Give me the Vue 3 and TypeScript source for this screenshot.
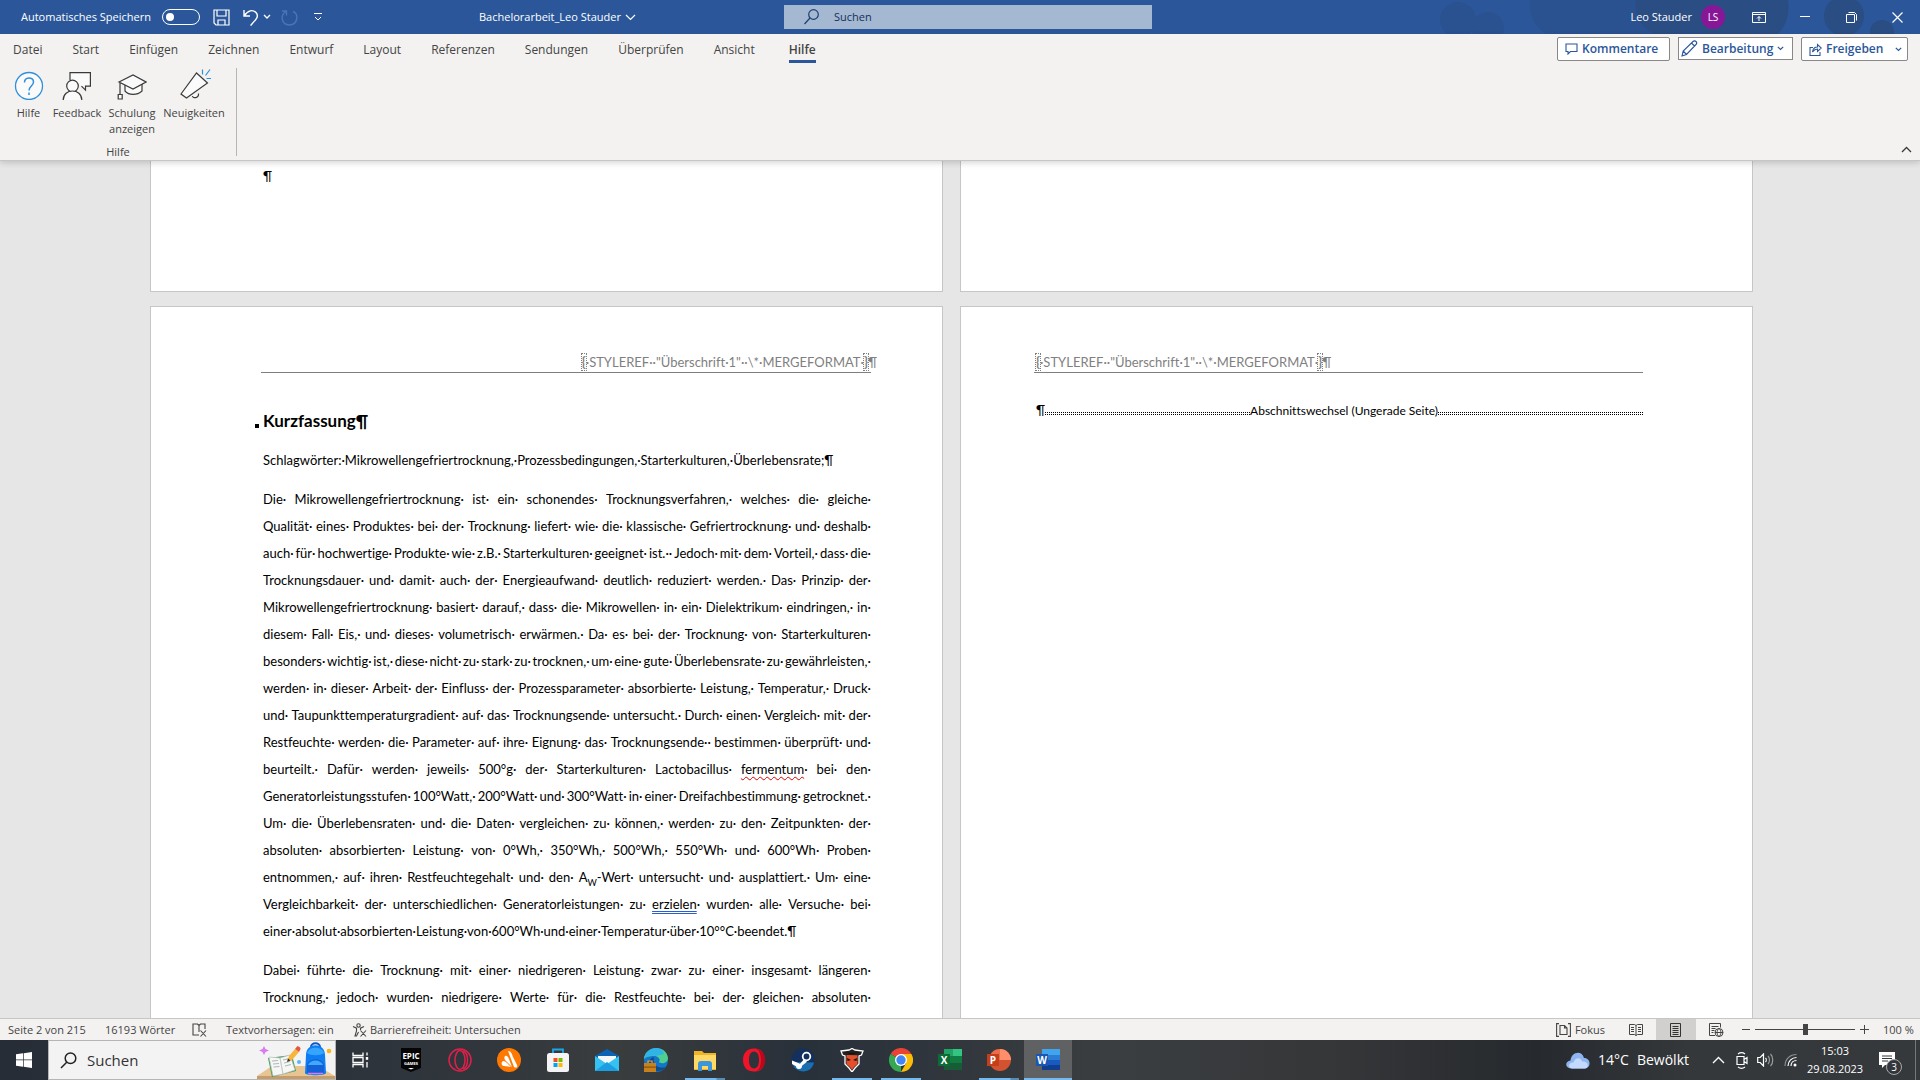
<script setup lang="ts">
import { ref } from 'vue'

interface RibbonCommand {
  icon: string
  lines: string[]
}

interface TaskApp {
  id: string
  running?: boolean
  grouped?: boolean
  active?: boolean
}

const tabs = ['Datei', 'Start', 'Einfügen', 'Zeichnen', 'Entwurf', 'Layout', 'Referenzen', 'Sendungen', 'Überprüfen', 'Ansicht', 'Hilfe']
const activeTab = ref('Hilfe')
const autosave = ref(false)
const zoom = ref(50)

const commands: RibbonCommand[] = [
  { icon: 'help', lines: ['Hilfe'] },
  { icon: 'feedback', lines: ['Feedback'] },
  { icon: 'training', lines: ['Schulung', 'anzeigen'] },
  { icon: 'news', lines: ['Neuigkeiten'] },
]

const apps: TaskApp[] = [
  { id: 'epic' },
  { id: 'operagx' },
  { id: 'avast' },
  { id: 'store' },
  { id: 'mail' },
  { id: 'edge' },
  { id: 'explorer', running: true, grouped: true },
  { id: 'opera' },
  { id: 'steam' },
  { id: 'knight', running: true },
  { id: 'chrome', running: true },
  { id: 'excel' },
  { id: 'powerpoint', running: true, grouped: true },
  { id: 'word', running: true, active: true },
]

const keywords = 'Schlagwörter:·Mikrowellengefriertrocknung,·Prozessbedingungen,·Starterkulturen,·Überlebensrate;'

const abstract = [
  'Die Mikrowellengefriertrocknung ist ein schonendes Trocknungsverfahren, welches die gleiche',
  'Qualität eines Produktes bei der Trocknung liefert wie die klassische Gefriertrocknung und deshalb',
  'auch für hochwertige Produkte wie z.B. Starterkulturen geeignet ist.· Jedoch mit dem Vorteil, dass die',
  'Trocknungsdauer und damit auch der Energieaufwand deutlich reduziert werden. Das Prinzip der',
  'Mikrowellengefriertrocknung basiert darauf, dass die Mikrowellen in ein Dielektrikum eindringen, in',
  'diesem Fall Eis, und dieses volumetrisch erwärmen. Da es bei der Trocknung von Starterkulturen',
  'besonders wichtig ist, diese nicht zu stark zu trocknen, um eine gute Überlebensrate zu gewährleisten,',
  'werden in dieser Arbeit der Einfluss der Prozessparameter absorbierte Leistung, Temperatur, Druck',
  'und Taupunkttemperaturgradient auf das Trocknungsende untersucht. Durch einen Vergleich mit der',
  'Restfeuchte werden die Parameter auf ihre Eignung das Trocknungsende· bestimmen überprüft und',
  'beurteilt. Dafür werden jeweils 500°g der Starterkulturen Lactobacillus fermentum bei den',
  'Generatorleistungsstufen 100°Watt, 200°Watt und 300°Watt in einer Dreifachbestimmung getrocknet.',
  'Um die Überlebensraten und die Daten vergleichen zu können, werden zu den Zeitpunkten der',
  'absoluten absorbierten Leistung von 0°Wh, 350°Wh, 500°Wh, 550°Wh und 600°Wh Proben',
  'entnommen, auf ihren Restfeuchtegehalt und den A_W-Wert untersucht und ausplattiert. Um eine',
  'Vergleichbarkeit der unterschiedlichen Generatorleistungen zu erzielen wurden alle Versuche bei',
].map((line) => line.split(' '))

const abstractEnd = 'einer·absolut·absorbierten·Leistung·von·600°Wh·und·einer·Temperatur·über·10°°C·beendet.'

const results = [
  'Dabei führte die Trocknung mit einer niedrigeren Leistung zwar zu einer insgesamt längeren',
  'Trocknung, jedoch wurden niedrigere Werte für die Restfeuchte bei der gleichen absoluten',
].map((line) => line.split(' '))

const proofing: Record<string, string> = { fermentum: 'spelling', erzielen: 'grammar' }
</script>

<template>
  <div class="screen">
    <header class="titlebar">
      <svg class="clouds" width="540" height="34" viewBox="0 0 540 34" aria-hidden="true">
        <g fill="#2a5190">
          <circle cx="78" cy="20" r="18" /><circle cx="108" cy="28" r="16" />
          <path d="M150 0h124v34H166c-12-8-18-20-16-34z" />
        </g>
        <g fill="#2a4d83">
          <path d="M256 0h152c2 14-2 26-10 34H274c-14-8-20-20-18-34z" />
          <circle cx="464" cy="16" r="20" /><circle cx="502" cy="32" r="12" />
        </g>
      </svg>
      <div class="quick">
        <label class="autosave">Automatisches Speichern
          <input v-model="autosave" type="checkbox" class="switch" />
        </label>
        <button class="bare save" aria-label="Speichern">
          <svg width="17" height="17" viewBox="0 0 17 17" fill="none" stroke="#fff" stroke-width="1.2"><path d="M1 1h15v15H3l-2-2zM4 1v6h9V1M5 16v-5h7v5" /></svg>
        </button>
        <button class="bare undo" aria-label="Rückgängig">
          <svg width="16" height="17" viewBox="0 0 16 17" fill="none" stroke="#fff" stroke-width="1.4"><path d="M1 1v6h6M1.500 6.500C5 1 10 .5 13 3.500c3.500 4 0 7-5.500 13" /></svg>
          <svg width="8" height="6" viewBox="0 0 8 6" fill="none" stroke="#fff" stroke-width="1.300"><path d="M1 1l3 3 3-3" /></svg>
        </button>
        <button class="bare redo" aria-label="Wiederholen" disabled>
          <svg width="17" height="17" viewBox="0 0 17 17" fill="none" stroke="#4a76b5" stroke-width="1.400"><path d="M5 2.500C-1 6 0 15.500 8.500 16 17 15.500 18 5 12 2.500M1 2h4.500v4.500" /></svg>
        </button>
        <button class="bare custom" aria-label="Symbolleiste anpassen">
          <svg width="8" height="8" viewBox="0 0 8 8" fill="none" stroke="#fff"><path d="M0 .5h8M1 4l3 3 3-3" /></svg>
        </button>
      </div>
      <button class="bare docname">Bachelorarbeit_Leo Stauder
        <svg width="11" height="7" viewBox="0 0 11 7" fill="none" stroke="#fff" stroke-width="1.200"><path d="M1 1l4.500 4.500L10 1" /></svg>
      </button>
      <div class="searchbox">
        <svg width="15" height="16" viewBox="0 0 15 16" fill="none" stroke="#1c3f73" stroke-width="1.200"><circle cx="9.500" cy="5.500" r="4.800" /><path d="M6 9l-5.500 6" /></svg>
        <input type="text" placeholder="Suchen" aria-label="Suchen" />
      </div>
      <div class="account">
        <span>Leo Stauder</span>
        <span class="avatar">LS</span>
        <button class="bare win" aria-label="Menüband-Anzeigeoptionen">
          <svg width="14" height="11" viewBox="0 0 14 11" fill="none" stroke="#fff"><path d="M.5.5h13v10H.5zM.5 2.500h13M7 9V4.500M5 6.500l2-2 2 2" /></svg>
        </button>
        <button class="bare win" aria-label="Minimieren">
          <svg width="11" height="11" viewBox="0 0 11 11" stroke="#fff"><path d="M0 4.500h10" /></svg>
        </button>
        <button class="bare win" aria-label="Verkleinern">
          <svg width="11" height="11" viewBox="0 0 11 11" fill="none" stroke="#fff"><path d="M.5 2.500h8v8h-8zM2.500.5h6l2 2v6" /></svg>
        </button>
        <button class="bare win" aria-label="Schließen">
          <svg width="11" height="11" viewBox="0 0 11 11" stroke="#fff" stroke-width="1.200"><path d="M.5.5l10 10M10.500.5l-10 10" /></svg>
        </button>
      </div>
    </header>

    <section class="ribbon">
      <div class="tabrow">
        <nav class="tabs">
          <button v-for="tab in tabs" :key="tab" class="tab" :class="{ current: tab === activeTab }" @click="activeTab = tab"><span>{{ tab }}</span></button>
        </nav>
        <div class="actions">
          <button class="action comments">
            <svg width="13" height="12" viewBox="0 0 13 12" fill="none" stroke="#2b579a" stroke-width="1.100"><path d="M1 1h11v7.500H5.500L3 11V8.500H1z" /></svg>
            Kommentare
          </button>
          <button class="action editing">
            <svg width="17" height="17" viewBox="0 0 17 17" fill="none" stroke="#2b579a" stroke-width="1.100"><path d="M1 16l1.200-5L12 1.500c1-1 2.300-.7 3 0s1 2 0 3L5.500 14.500zM10.500 3l3 3M2.200 11l3.300 3.500" /></svg>
            Bearbeitung
            <svg width="7" height="5" viewBox="0 0 7 5" fill="none" stroke="#2b579a" stroke-width="1.200"><path d="M.8.8l2.700 2.700L6.200.8" /></svg>
          </button>
          <button class="action share">
            <svg width="13" height="13" viewBox="0 0 13 13" fill="none" stroke="#2b579a" stroke-width="1.100"><path d="M4 4.500H1v8h10V9M3.500 9c.5-3.500 2.500-5 5-5V1.500L12.300 5 8.500 8.500V6C6.500 6 5 7 3.500 9z" /></svg>
            Freigeben
            <svg class="far" width="7" height="5" viewBox="0 0 7 5" fill="none" stroke="#2b579a" stroke-width="1.200"><path d="M.8.8l2.700 2.700L6.200.8" /></svg>
          </button>
        </div>
      </div>
      <div class="commands">
        <div class="group">
          <div class="grouprow">
            <button v-for="cmd in commands" :key="cmd.icon" class="command" :class="cmd.icon">
              <svg v-if="cmd.icon === 'help'" width="30" height="32" viewBox="0 0 30 32" fill="none" stroke="#2e8fdb" stroke-width="1.300"><circle cx="15" cy="18" r="13.500" fill="#fafafa" /><path d="M10.500 14.500c0-6 9-6 9-.5 0 4-4.500 4-4.500 8.500M15 24.500v2.500" stroke-width="1.500" /></svg>
              <svg v-else-if="cmd.icon === 'feedback'" width="30" height="32" viewBox="0 0 30 32" fill="#fafafa" stroke="#3b3a39" stroke-width="1.200"><path d="M8 12V4.600h20.400v13.500H23.500v4l-4-4" /><circle cx="10.500" cy="18" r="5.800" /><path d="M1.200 32c0-12 18.600-12 18.600 0" /></svg>
              <svg v-else-if="cmd.icon === 'training'" width="30" height="32" viewBox="0 0 30 32" fill="#fafafa" stroke="#3b3a39" stroke-width="1.200"><path d="M8 16v7c4 4.500 12 4.500 17 0v-7" /><path d="M2 14l14-7 13 7-13 7zM3 14.500V26M1.200 26.500h4V31h-4z" /></svg>
              <svg v-else width="34" height="32" viewBox="0 0 34 32" fill="#fafafa" stroke="#3b3a39" stroke-width="1.200"><path d="M15.500 28c.5 3 6.500 2 6-2.500" /><path d="M19.500 5l11 10-21 15-5.500-4z" /><path d="M25.500 1.500v5M28.500 7.500l4.500-6M29.500 10.500h4.500" stroke="#2e8fdb" /></svg>
              <span v-for="line in cmd.lines" :key="line">{{ line }}</span>
            </button>
          </div>
          <div class="grouplabel">Hilfe</div>
        </div>
        <button class="bare collapse" aria-label="Menüband reduzieren">
          <svg width="11" height="7" viewBox="0 0 11 7" fill="none" stroke="#3b3a39" stroke-width="1.300"><path d="M1 6l4.500-4.500L10 6" /></svg>
        </button>
      </div>
    </section>

    <main class="canvas">
      <div class="spread">
        <article class="sheet tail"><p class="mark">¶</p></article>
        <article class="sheet tail"></article>
      </div>
      <div class="spread rest">
        <article class="sheet left">
          <div class="runhead end"><span class="field"><span class="brace">{</span>·STYLEREF··"Überschrift·1"··\*·MERGEFORMAT·<span class="brace">}</span>¶</span></div>
          <h1>Kurzfassung¶</h1>
          <p class="line">{{ keywords }}¶</p>
          <div class="para">
            <p v-for="(words, i) in abstract" :key="i" class="line just">
              <template v-for="(word, j) in words" :key="j">
                <span v-if="word.startsWith('A_')">A<sub>W</sub>-Wert·</span>
                <span v-else><span :class="proofing[word]">{{ word }}</span>·</span>
              </template>
            </p>
            <p class="line">{{ abstractEnd }}¶</p>
          </div>
          <div class="para">
            <p v-for="(words, i) in results" :key="i" class="line just">
              <span v-for="(word, j) in words" :key="j">{{ word }}·</span>
            </p>
          </div>
        </article>
        <article class="sheet right">
          <div class="runhead"><span class="field"><span class="brace">{</span>·STYLEREF··"Überschrift·1"··\*·MERGEFORMAT·<span class="brace">}</span>¶</span></div>
          <div class="break"><span class="pilcrow">¶</span><i></i><span>Abschnittswechsel (Ungerade Seite)</span><i></i></div>
        </article>
      </div>
    </main>

    <footer class="status">
      <span class="page">Seite 2 von 215</span>
      <span class="words">16193 Wörter</span>
      <svg class="proof" width="15" height="14" viewBox="0 0 15 14" fill="none" stroke="#444" stroke-width="1.100"><path d="M7 12H1V1h4.500L7 2.500 8.500 1H13v5M7 2.500V9M8.500 7.500l5.500 6M14 7.500l-5.500 6" /></svg>
      <span class="predict">Textvorhersagen: ein</span>
      <svg class="acc" width="15" height="14" viewBox="0 0 15 14" fill="none" stroke="#444" stroke-width="1.100"><circle cx="6.500" cy="2.500" r="1.700" /><path d="M1 3.500l3.500 1.700V8L3 13h1.500l2-4M12 3.500L8.500 5.200V7M8.500 7.500l5.500 6M14 7.500l-5.500 6" /></svg>
      <span class="access">Barrierefreiheit: Untersuchen</span>
      <div class="views">
        <button class="bare focus">
          <svg width="15" height="14" viewBox="0 0 15 14" fill="none" stroke="#444" stroke-width="1.100"><path d="M3 .6H.6V13.400H3M12 .6h2.400v12.800H12M4 2.500h4.500L11 5v6.500H4zM8.500 2.500V5H11" /></svg>
          Fokus
        </button>
        <button class="bare view" aria-label="Lesemodus">
          <svg width="14" height="13" viewBox="0 0 14 13" fill="none" stroke="#444"><path d="M.5 1.500h5L7 2.500l1.500-1h5v10h-5l-1.500 1-1.500-1h-5zM7 2.500v10M2 4.500h3M2 6.500h3M2 8.500h3M9 4.500h3M9 6.500h3M9 8.500h3" /></svg>
        </button>
        <button class="bare view on" aria-label="Seitenlayout">
          <svg width="12" height="14" viewBox="0 0 12 14" fill="none" stroke="#333"><path d="M.5.5h10v13H.5zM2.500 3.500h6M2.500 5.500h6M2.500 7.500h6M2.500 9.500h6M2.500 11.500h6" /></svg>
        </button>
        <button class="bare view" aria-label="Weblayout">
          <svg width="15" height="14" viewBox="0 0 15 14" fill="none" stroke="#444"><path d="M6 12.500H.5V.5h11v4M2.500 3.500h7M2.500 5.500h4M2.500 7.500h3M2.500 9.500h2" /><circle cx="10" cy="9.500" r="4" /><path d="M6 9.500h8M10 5.500c-2.500 2-2.500 6 0 8 2.500-2 2.500-6 0-8z" /></svg>
        </button>
        <button class="bare step" aria-label="Verkleinern">
          <svg width="9" height="9" viewBox="0 0 9 9" stroke="#444"><path d="M0 4.500h8" /></svg>
        </button>
        <input v-model="zoom" class="slider" type="range" min="0" max="100" aria-label="Zoom" />
        <button class="bare step" aria-label="Vergrößern">
          <svg width="9" height="9" viewBox="0 0 9 9" stroke="#444"><path d="M0 4.500h9M4.500 0v9" /></svg>
        </button>
        <span class="percent">100 %</span>
      </div>
    </footer>

    <div class="taskbar">
      <button class="bare start" aria-label="Start">
        <svg width="16" height="16" viewBox="0 0 16 16" fill="#fff"><path d="M0 2.300L7 1.300V7.600H0zM7.700 1.200L16 0v7.600H7.700zM0 8.300h7v6.400L0 13.700zM7.700 8.300H16V16l-8.300-1.200z" /></svg>
      </button>
      <div class="tasksearch">
        <svg class="glass" width="17" height="17" viewBox="0 0 17 17" fill="none" stroke="#222" stroke-width="1.500"><circle cx="10.500" cy="6.300" r="5.300" /><path d="M6.700 10.200L1 16" /></svg>
        <input type="text" placeholder="Suchen" aria-label="Taskleistensuche" />
        <svg class="art" width="78" height="38" viewBox="0 0 78 38" aria-hidden="true">
          <path d="M0 35l15-10h46l17 10z" fill="#e8c493" /><path d="M0 35h78v3H0z" fill="#c69c6a" />
          <path d="M7 5l1.500 3L12 9.500 8.500 11 7 14l-1.500-3L2 9.500 5.500 8z" fill="#d87bf0" />
          <path d="M11 17l24-3 4 16-24 6z" fill="#3e9a52" /><path d="M12 16l11 1 3 16-10 2zM23 17l10-3 5 15-12 4z" fill="#f6f6f4" stroke="#bfc4c8" stroke-width=".7" />
          <path d="M15 20l6-.5M16 23l6-.5M16.500 26l6-.5M26 19l6-1.500M27 22l6-1.500M28 25l6-1.500" stroke="#9aa4ad" stroke-width=".8" />
          <path d="M30 21l2-6 6-7 4 3-7 8z" fill="#f7b53b" /><path d="M38 8l2-2.500c1-1 4 1 3.500 2.500L42 11z" fill="#e8553e" /><path d="M30 21l1-3.500 2.500 2z" fill="#333" />
          <circle cx="42" cy="21" r="2" fill="#5db5f5" /><circle cx="72" cy="10" r="2.300" fill="#fdb515" />
          <path d="M54 6c0-5 9-5 9 0" fill="none" stroke="#0e57c4" stroke-width="2" />
          <path d="M49 14c0-13 19-13 19 0l1 18c0 3-21 3-21 0z" fill="#0f7df2" /><path d="M50 12c2-7 15-7 17 0-4 3-13 3-17 0z" fill="#35a5ff" />
          <path d="M50 25c0-9 17-9 17 0v7H50z" fill="#1360d8" /><path d="M51 24c2-6 13-6 15 0z" fill="#40a9fb" /><path d="M51 32.500h15" stroke="#d37cf2" stroke-width="1.500" />
        </svg>
      </div>
      <button class="bare taskview" aria-label="Aktive Anwendungen">
        <svg width="17" height="16" viewBox="0 0 17 16" fill="none" stroke="#fff" stroke-width="1.300"><path d="M1 .5v3h10v-3M1 15.500v-3h10v3M1 5.500h10v5H1zM15 .5v3M15 10v5.500" /><path d="M13.800 5h2.400v2.800h-2.400z" fill="#fff" stroke="none" /></svg>
      </button>
      <button v-for="app in apps" :key="app.id" class="bare app" :class="{ running: app.running, grouped: app.grouped, active: app.active }" :aria-label="app.id">
        <svg width="24" height="24" viewBox="0 0 24 24">
          <template v-if="app.id === 'epic'">
            <path d="M2 0h20v20l-10 4-10-4z" fill="#050505" /><text x="12" y="11" class="epic big">EPIC</text><text x="12" y="17" class="epic small">GAMES</text><path d="M9 20h6l-3 1.500z" fill="#fff" />
          </template>
          <template v-else-if="app.id === 'operagx'">
            <g fill="none" stroke="#e0204a" stroke-width="1.500"><circle cx="12" cy="12" r="11" /><ellipse cx="12" cy="12" rx="5" ry="9.500" /><path d="M15 3c6 2 6 16 0 18" /></g>
          </template>
          <template v-else-if="app.id === 'avast'">
            <circle cx="12" cy="12" r="12" fill="#ff7800" /><path d="M11 3c3 0 4 3 5 6l4 8c1 3-1 3-3 2zM8 8c2-1 3 1 4 3l3 8-6-6c-2-2-2-4-1-5zM5 14c1-2 3-1 5 1l4 4-7-1c-2 0-3-2-2-4z" fill="#fff" />
          </template>
          <template v-else-if="app.id === 'store'">
            <path d="M7 7V1.500h10V7" fill="none" stroke="#1da7e8" stroke-width="1.800" /><rect x="1" y="5" width="22" height="19" rx="2.500" fill="#f4f4f4" /><path d="M7.500 10h4v4h-4z" fill="#f25022" /><path d="M12.500 10h4v4h-4z" fill="#7fba00" /><path d="M7.500 15h4v4h-4z" fill="#00a4ef" /><path d="M12.500 15h4v4h-4z" fill="#ffb900" />
          </template>
          <template v-else-if="app.id === 'mail'">
            <path d="M0 8l12-7 12 7v15H0z" fill="#0a63b5" /><path d="M3 8h18v9H3z" fill="#f3f7fa" /><path d="M0 8l12 8L24 8v15H0z" fill="#35c1f1" /><path d="M0 23l12-9 12 9z" fill="#1a9fe3" />
          </template>
          <template v-else-if="app.id === 'edge'">
            <circle cx="12" cy="12" r="12" fill="#1377c9" /><path d="M0 11C1-2 22-4 24 10c0 6-8 6-9 4 2-3-1-6-5-6-5 0-9 1-10 3z" fill="#4fd08f" /><path d="M0 11C1 4 6 0 12 0c4 0 7 2 8 6-3 1-6 1-8 2-5-1-9 0-12 3z" fill="#2fb3e8" /><path d="M10 9c-2 8 4 12 12 10-4 5-14 6-17-1-1-4 1-8 5-9z" fill="#114a8b" /><path d="M0 15h12v9H0z" fill="#c7811d" /><path d="M4 15v-2h4v2" fill="none" stroke="#e5a53a" stroke-width="1.200" /><path d="M0 18.500h12v1.200H0z" fill="#8a5210" />
          </template>
          <template v-else-if="app.id === 'explorer'">
            <path d="M1 3h8l2 2h12v17H1z" fill="#f0b429" /><path d="M1 7h22v14H1z" fill="#ffd966" /><path d="M5 23v-7c0-2 1-3 3-3h8c2 0 3 1 3 3v7h-4v-5H9v5z" fill="#3a96dd" />
          </template>
          <template v-else-if="app.id === 'opera'">
            <path fill-rule="evenodd" d="M12 0.500C5 .5 1 5 1 12s4 11.500 11 11.500S23 19 23 12 19 .5 12 .5zm0 3c3.500 0 5 4 5 8.500s-1.500 8.500-5 8.500-5-4-5-8.500 1.500-8.500 5-8.500z" fill="#f0142a" /><path d="M14 1c6 1 9 5 9 11s-3 10-9 11c3-1 5-5 5-11S17 2 14 1z" fill="#a70014" opacity=".7" />
          </template>
          <template v-else-if="app.id === 'steam'">
            <circle cx="12" cy="12" r="11.500" fill="#14305e" /><path d="M1 14c1 6 6 9.500 11 9.500 6 0 10-4 11-9z" fill="#1b6fb0" /><circle cx="15.500" cy="8.500" r="3.800" fill="#14305e" stroke="#fff" stroke-width="1.800" /><path d="M1 12.500l8 3.200 4-4.500 3 2.500-5 4a3 3 0 0 1-6 .5L1 16z" fill="#fff" />
          </template>
          <template v-else-if="app.id === 'knight'">
            <path d="M1 3l8-1 3-1.500L15 2l8 1-1.500 4-2.500 1v8l-4 4-3 4-3-4-4-4V8L2.500 7z" fill="#222" stroke="#fff" stroke-width="1.300" /><path d="M6.500 7l11 .2V16L14 19l-2 3-2-3-3.500-3z" fill="#e5502a" /><path d="M7 10l4 2-3.500 1zM17 10l-4 2 3.500 1zM4 4l8 2.500L20 4l-8 1z" fill="#111" />
          </template>
          <template v-else-if="app.id === 'chrome'">
            <path d="M12 12L1.600 6a12 12 0 0 1 20.800 0z" fill="#ea4335" /><path d="M12 12L12 24A12 12 0 0 1 1.600 6z" fill="#34a853" /><path d="M12 6h10.400A12 12 0 0 1 12 24l5.200-9z" fill="#fbbc05" /><circle cx="12" cy="12" r="6" fill="#fff" /><circle cx="12" cy="12" r="4.700" fill="#4285f4" />
          </template>
          <template v-else-if="app.id === 'excel'">
            <path d="M6 1h18v21H6z" fill="#107c41" /><path d="M15 1h9v7h-9z" fill="#33c481" /><path d="M6 1h9v7H6z" fill="#21a366" /><path d="M6 15h18v7H6z" fill="#185c37" /><path d="M0 6h12v12H0z" fill="#0e6b38" /><text x="6" y="16" class="letter">X</text>
          </template>
          <template v-else-if="app.id === 'powerpoint'">
            <circle cx="13" cy="12" r="11" fill="#d35230" /><path d="M13 1a11 11 0 0 1 11 11H13z" fill="#ff8f6b" /><path d="M2 12a11 11 0 0 1 11-11v11z" fill="#ed6c47" /><path d="M0 6h12v12H0z" fill="#c43e1c" /><text x="6" y="16" class="letter">P</text>
          </template>
          <template v-else>
            <path d="M6 1h18v6H6z" fill="#41a5ee" /><path d="M6 7h18v5H6z" fill="#2b7cd3" /><path d="M6 12h18v5H6z" fill="#185abd" /><path d="M6 17h18v5H6z" fill="#103f91" /><path d="M0 6h12v12H0z" fill="#1a56b4" /><text x="6" y="16" class="letter">W</text>
          </template>
        </svg>
      </button>
      <div class="tray">
        <button class="bare weather">
          <svg width="24" height="17" viewBox="0 0 24 17"><path d="M5 16.500C-1.500 16-1 9 4.500 8.500 5.500-.5 16-2 18 6c7 0 7.500 10 1 10.500z" fill="#8eb5f0" /><path d="M6 16.500c-5-1-3-7 1.500-6C9 5 15 5 16 9.500c6-1 8 6 3 7z" fill="#c4d9fb" /></svg>
          <span>14°C</span><span>Bewölkt</span>
        </button>
        <button class="bare more" aria-label="Ausgeblendete Symbole">
          <svg width="13" height="8" viewBox="0 0 13 8" fill="none" stroke="#fff" stroke-width="1.400"><path d="M1 7l5.500-5.500L12 7" /></svg>
        </button>
        <svg class="meet" width="12" height="17" viewBox="0 0 12 17" fill="none" stroke="#fff" stroke-width="1.200"><path d="M1 4.500h7v8H1zM8 7.500L11 5.500v6L8 9.500M2 2c2-1.500 5-1.500 7 0M2 15c2 1.500 5 1.500 7 0" /></svg>
        <svg class="volume" width="17" height="14" viewBox="0 0 17 14" fill="none" stroke="#fff" stroke-width="1.200"><path d="M.7 4.500h2.500L6.500 1v12L3.200 9.500H.7zM8.500 5c1 1 1 3 0 4" /><path d="M11 3c2 2 2 6 0 8M13.500 1c3 3 3 9 0 12" stroke="#9a9c9e" /></svg>
        <svg class="wifi" width="13" height="14" viewBox="0 0 13 14" fill="none" stroke="#fff" stroke-width="1.200"><path d="M1 13C1 6 6 1.500 12.500 1.500" stroke="#8d9092" /><path d="M4 13c0-5 4-8.500 8.500-8.500M7 13c0-3.500 2.500-5.500 5.500-5.500" /><circle cx="11" cy="12" r="1.500" fill="#fff" stroke="none" /></svg>
        <div class="clock"><span>15:03</span><span>29.08.2023</span></div>
        <button class="bare notify" aria-label="Benachrichtigungen">
          <svg width="16" height="16" viewBox="0 0 16 16"><path d="M0 0h16v13H6l-3 3v-3H0z" fill="#fff" /><path d="M3 4h10M3 6.500h10M3 9h6" stroke="#33373b" /></svg>
          <span class="count">3</span>
        </button>
      </div>
    </div>
  </div>
</template>

<style>
body {
  margin: 0;
  background: #e6e6e6;
}
</style>

<style scoped>
.screen {
  display: flex;
  flex-direction: column;
  height: 100vh;
  overflow: hidden;
  font: 12px/16px "Open Sans", sans-serif;
  color: #444;
}
.bare {
  border: 0;
  padding: 0;
  background: none;
  font: inherit;
  color: inherit;
  display: flex;
  align-items: center;
}
p, h1 { margin: 0; }
svg { flex: none; }

.titlebar {
  position: relative;
  display: flex;
  align-items: center;
  flex: none;
  height: 34px;
  background: #2b579a;
  color: #fff;
  font-size: 11px;
}
.clouds {
  position: absolute;
  right: 0;
  top: 0;
}
.quick {
  display: flex;
  align-items: center;
  width: 479px;
  flex: none;
}
.autosave {
  display: flex;
  align-items: center;
  justify-content: space-between;
  width: 179px;
  margin-left: 21px;
}
.switch {
  appearance: none;
  position: relative;
  width: 38px;
  height: 16px;
  margin: 0;
  border: 1px solid #fff;
  border-radius: 8px;
}
.switch::before {
  content: "";
  position: absolute;
  left: 3px;
  top: 3px;
  width: 8px;
  height: 8px;
  border-radius: 50%;
  background: #fff;
}
.switch:checked::before { left: 25px; }
.save { margin-left: 13px; }
.undo { margin-left: 13px; gap: 4px; }
.redo { margin-left: 10px; }
.custom { margin-left: 16px; }
.docname {
  flex: none;
  gap: 4px;
  white-space: nowrap;
}
.searchbox {
  display: flex;
  align-items: center;
  width: 368px;
  height: 24px;
  background: #a5b8d1;
  position: absolute;
  left: 784px;
  top: 5px;
}
.searchbox svg { margin: 0 15px 0 20px; }
.searchbox input, .tasksearch input {
  border: 0;
  padding: 0;
  background: none;
  font: inherit;
  flex: 1;
  min-width: 0;
  outline: none;
}
.searchbox input::placeholder { color: #14305e; opacity: 1; }
.account {
  position: relative;
  display: flex;
  align-items: center;
  margin-left: auto;
}
.avatar {
  width: 24px;
  height: 24px;
  margin: 0 11px 0 9px;
  border-radius: 50%;
  background: #881798;
  line-height: 24px;
  text-align: center;
  font-size: 10px;
}
.win {
  width: 46px;
  height: 32px;
  justify-content: center;
}

.ribbon {
  position: relative;
  z-index: 1;
  flex: none;
  height: 126px;
  background: #f3f2f1;
  border-bottom: 1px solid #c8c6c4;
  box-shadow: 0 2px 6px rgba(0, 0, 0, .16);
}
.tabrow {
  display: flex;
  height: 30px;
}
.tabs { display: flex; }
.tab {
  border: 0;
  background: none;
  padding: 0 15px;
  font: inherit;
  color: #444;
}
.tab:first-child { padding-left: 13px; }
.tab:last-child { padding-left: 19px; }
.tab span {
  display: block;
  height: 22px;
  margin-top: 3px;
  border-bottom: 3px solid transparent;
  line-height: 24px;
}
.tab.current span { border-color: #2b579a; font-weight: 600; }
.actions {
  display: flex;
  gap: 8px;
  margin: 3px 12px 0 auto;
}
.action {
  display: flex;
  align-items: center;
  gap: 4px;
  height: 24px;
  padding: 0 7px;
  border: 1px solid #8a8886;
  border-radius: 2px;
  background: #fff;
  color: #2b579a;
  font: 600 12px/16px "Open Sans", sans-serif;
}
.comments { width: 113px; }
.editing { width: 115px; height: 23px; padding: 0 2px; border-radius: 0; }
.share { width: 107px; padding-right: 5px; }
.far { margin-left: auto; }

.commands {
  display: flex;
  justify-content: space-between;
  height: 94px;
}
.group {
  display: flex;
  flex-direction: column;
  width: 236px;
  height: 88px;
  margin-top: 4px;
  border-right: 1px solid #b8b6b4;
}
.grouprow {
  display: flex;
  flex: none;
  height: 76px;
}
.command {
  display: flex;
  flex-direction: column;
  align-items: center;
  border: 0;
  padding: 0;
  background: none;
  font: 11px/16px "Open Sans", sans-serif;
  color: #444;
}
.command svg { margin-bottom: 5px; }
.command.help { width: 57px; }
.command.feedback { width: 40px; }
.command.training { width: 70px; }
.command.news { width: 54px; }
.grouplabel {
  text-align: center;
  font-size: 11px;
  line-height: 16px;
}
.collapse { align-self: flex-end; margin: 0 8px 5px 0; }

.canvas {
  display: flex;
  flex-direction: column;
  flex: 1;
  min-height: 0;
  gap: 14px;
  padding-right: 17px;
  overflow: hidden;
  background: #e6e6e6;
  color: #000;
  font: 13px/27px Lato, sans-serif;
  font-variant-ligatures: none;
}
.spread {
  display: flex;
  justify-content: center;
  gap: 17px;
}
.rest { flex: 1; min-height: 0; }
.sheet {
  box-sizing: border-box;
  width: 793px;
  border: 1px solid #c6c6c6;
  background: #fff;
}
.rest .sheet { border-bottom: 0; }
.tail {
  height: 131px;
  border-top: 0;
}
.mark { padding: 2px 0 0 112px; }
.left { padding: 43px 71px 0 112px; }
.right { padding: 43px 109px 0 75px; }
.runhead {
  display: flex;
  height: 22px;
  border-bottom: 1px solid #7f7f7f;
  margin-left: -2px;
  line-height: 24px;
  color: #7f7f7f;
  white-space: pre;
}
.runhead .field { margin-left: 2px; }
.runhead.end { justify-content: flex-end; }
.runhead.end .field { margin-right: -6px; }
.brace {
  outline: 1px dotted #7f7f7f;
  font-weight: 700;
}
h1 {
  position: relative;
  margin-top: 34px;
  font: 700 17px/27px Lato, sans-serif;
}
h1::before {
  content: "";
  position: absolute;
  left: -8px;
  top: 17px;
  width: 4px;
  height: 4px;
  background: #000;
}
.line { white-space: nowrap; height: 27px; }
h1 + .line { margin-top: 13px; }
.para { margin-top: 12px; }
.just {
  display: flex;
  justify-content: space-between;
}
sub { font-size: 9px; line-height: 0; }
.spelling { text-decoration: underline wavy #e00000 1px; text-underline-offset: 2px; }
.grammar { text-decoration: underline double #2b5fd0 1px; text-underline-offset: 2px; }
.break {
  display: flex;
  align-items: center;
  margin-top: 24px;
  font-size: 12px;
}
.pilcrow { font-size: 13px; }
.break i {
  flex: 1;
  height: 1px;
  margin-top: 6px;
  border-top: 1px dotted #000;
  border-bottom: 1px dotted #000;
}

.status {
  display: flex;
  align-items: center;
  flex: none;
  height: 21px;
  border-top: 1px solid #c6c6c6;
  background: #f3f2f1;
  font-size: 11px;
  white-space: nowrap;
}
.page { width: 97px; padding-left: 8px; }
.words { width: 87px; }
.proof { margin-right: 19px; }
.predict { width: 126px; }
.acc { margin-right: 3px; }
.views {
  display: flex;
  align-items: center;
  align-self: stretch;
  margin-left: auto;
}
.focus { gap: 4px; margin-right: 11px; }
.view {
  width: 40px;
  align-self: stretch;
  justify-content: center;
}
.view.on { background: #d2d0ce; }
.step { width: 9px; margin-left: 5px; }
.view + .step { margin-left: 6px; }
.slider {
  appearance: none;
  width: 100px;
  height: 12px;
  margin: 0 0 0 4px;
  background: linear-gradient(#444, #444) center / 100% 1px no-repeat;
}
.slider::-webkit-slider-thumb {
  appearance: none;
  width: 5px;
  height: 11px;
  background: #444;
}
.percent { width: 37px; margin-left: 14px; }

.taskbar {
  display: flex;
  align-items: stretch;
  flex: none;
  height: 40px;
  background: linear-gradient(90deg, #262d36, #30363c 25%, #3a3d3e 32%, #28303a 42%, #3b3e40 58%, #343638 70%, #26292d 80%, #34383b 88%, #36393b);
  color: #fff;
}
.start { width: 48px; justify-content: center; }
.tasksearch {
  box-sizing: border-box;
  display: flex;
  align-items: center;
  width: 288px;
  height: 40px;
  border: 1px solid #b5b5b5;
  background: #f3f3f3;
  font-size: 15px;
}
.glass { margin: 0 10px 0 11px; }
.tasksearch input::placeholder { color: #333; opacity: 1; }
.taskview { width: 51px; padding-left: 16px; }
.app {
  position: relative;
  width: 48px;
  margin-right: 1px;
  justify-content: center;
}
.running::after {
  content: "";
  position: absolute;
  left: 4px;
  right: 4px;
  bottom: 0;
  height: 2px;
  background: #76b9ed;
}
.grouped::after { background: linear-gradient(90deg, #76b9ed 31px, #5b8bb0 32px); }
.active { background: #5f6163; }
.active::after { left: 0; right: 0; }
.epic {
  fill: #fff;
  font-family: "Open Sans", sans-serif;
  font-weight: 700;
  text-anchor: middle;
}
.big { font-size: 8px; }
.small { font-size: 4px; }
.letter {
  fill: #fff;
  font: 700 10px "Open Sans", sans-serif;
  text-anchor: middle;
}
.tray {
  display: flex;
  align-items: center;
  margin-left: auto;
}
.weather {
  gap: 8px;
  margin-right: 23px;
  font-size: 14px;
}
.more { width: 24px; }
.meet { margin-right: 9px; }
.volume { margin-right: 10px; }
.wifi { margin-right: 6px; }
.clock {
  display: flex;
  flex-direction: column;
  width: 64px;
  text-align: center;
  font-size: 11px;
  line-height: 18px;
}
.notify {
  position: relative;
  width: 41px;
  height: 40px;
  margin: 0 4px 0 8px;
  padding-left: 4px;
  border-right: 1px solid #777;
}
.count {
  position: absolute;
  left: 11px;
  top: 19px;
  width: 14px;
  height: 14px;
  border: 1px solid #aaa;
  border-radius: 50%;
  background: #33373b;
  font-size: 10px;
  line-height: 14px;
}
</style>
